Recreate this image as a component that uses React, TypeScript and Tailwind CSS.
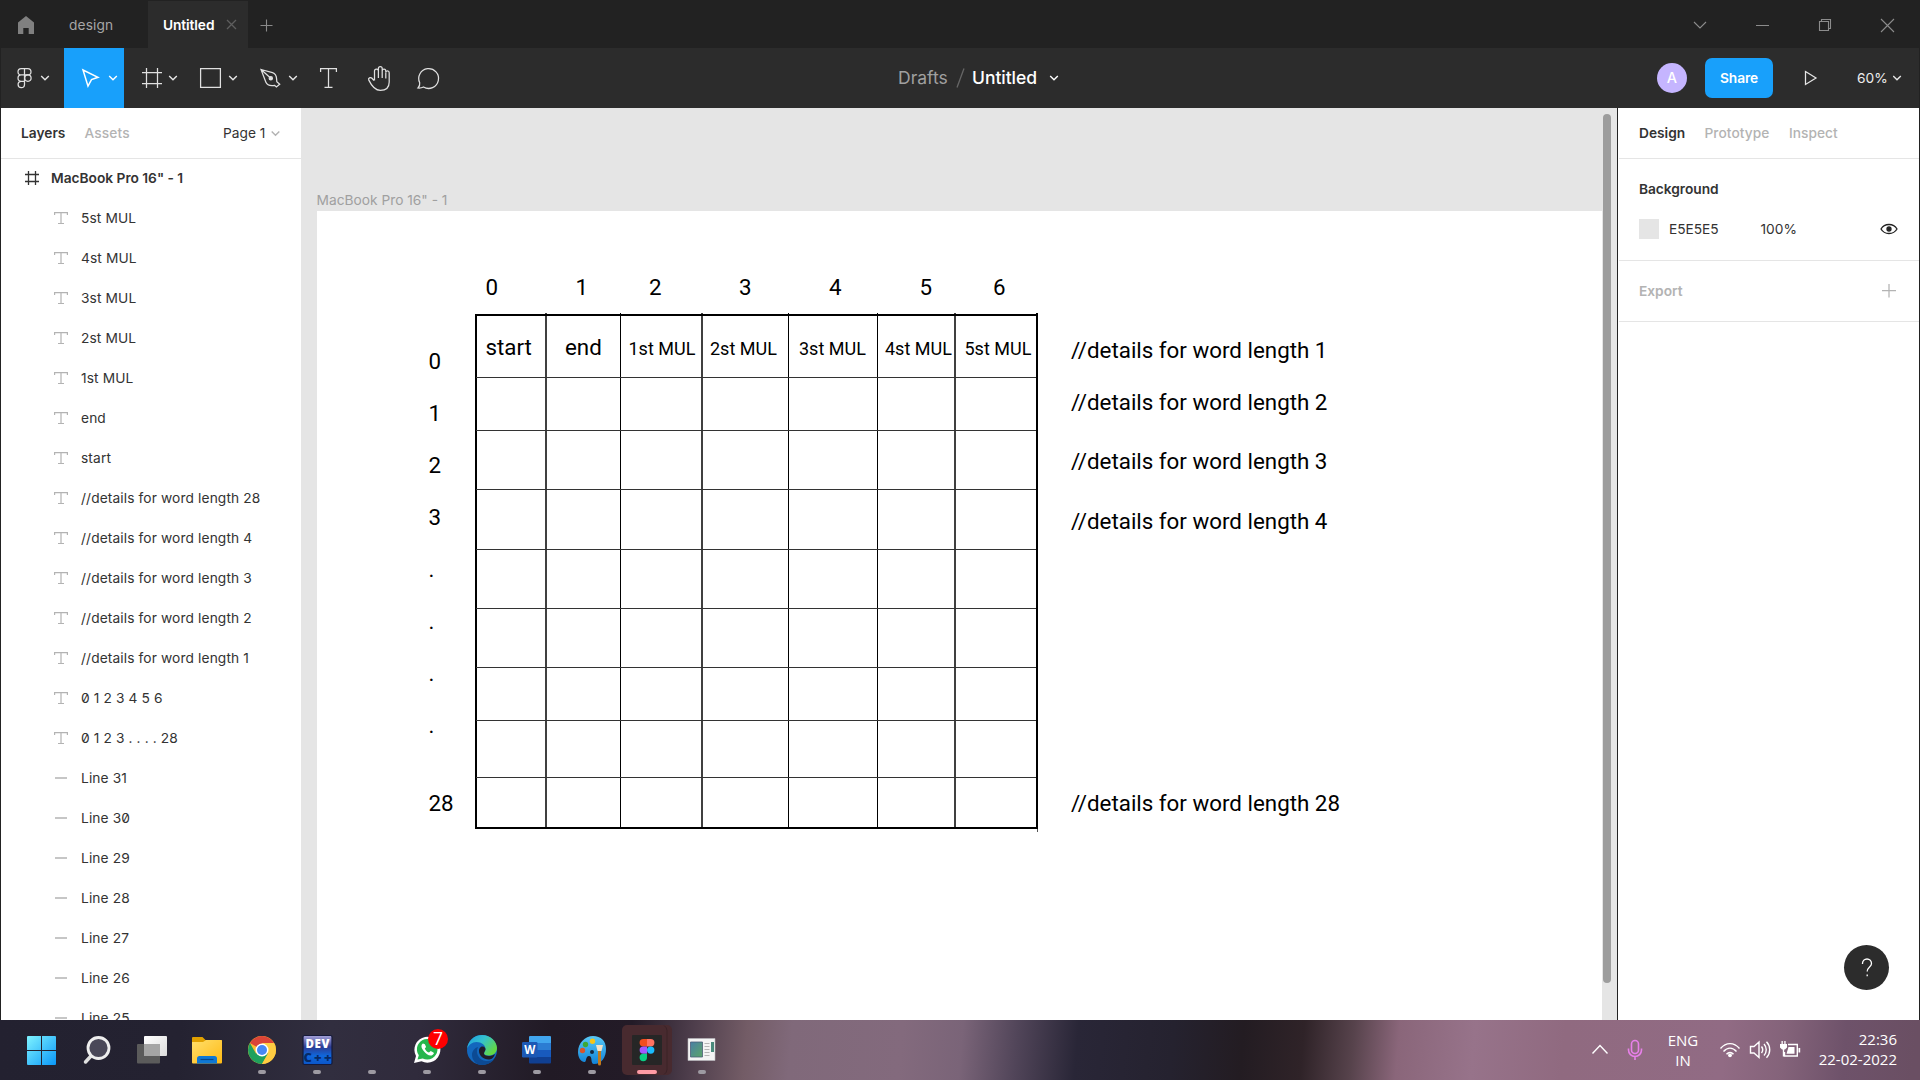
import React from "react";

const ui = "font-['Inter',sans-serif]";

function Chevron({ x, y, s = "#e6e6e6" }: { x: number; y: number; s?: string }) {
  return <path d={`M${x - 3.8} ${y - 2}l3.8 3.8 3.8-3.8`} fill="none" stroke={s} strokeWidth="1.4" />;
}

function Tool({ x, w, active, children }: { x: number; w: number; active?: boolean; children: React.ReactNode }) {
  return (
    <button className={active ? "h-[60px] shrink-0 bg-[#18a0fb]" : "h-[60px] shrink-0"} style={{ width: w }}>
      <svg width={w} height="60" viewBox={`${x} 48 ${w} 60`} fill="none" stroke="#e0e0e0" strokeWidth="1.25">
        {children}
      </svg>
    </button>
  );
}

function TitleBar() {
  return (
    <div className={`flex h-12 items-center bg-[#222222] ${ui}`}>
      <svg className="ml-[17px] shrink-0" width="18" height="20" viewBox="17 14 18 20">
        <path d="M18 22.5L26 16l8 6.500V34h-5.300v-6h-5.400v6H18z" fill="#808080" />
      </svg>
      <div className="ml-[34px] mt-[2px] w-[79px] text-[13.75px] leading-5 tracking-[0.1px] text-[#a6a6a6]">design</div>
      <div className="mt-px flex h-[47px] w-[100px] items-center bg-[#2c2c2c] pl-[15px]">
        <span className="w-[63px] text-[13.75px] font-semibold leading-5 tracking-[-0.1px] text-white">Untitled</span>
        <svg width="11" height="11" viewBox="0 0 11 11" stroke="#5e5e5e" strokeWidth="1.300">
          <path d="M1 1l9 9M10 1l-9 9" />
        </svg>
      </div>
      <svg className="ml-[12px] mt-[2px]" width="13" height="13" viewBox="260 19 13 13" stroke="#8a8a8a" strokeWidth="1.1">
        <path d="M260.500 25.500h12M266.500 19.500v12" />
      </svg>
      <svg className="ml-auto" width="240" height="48" viewBox="1680 0 240 48" fill="none" stroke="#8c8c8c" strokeWidth="1.100">
        <path d="M1694 22l6 6 6-6M1756 25.500h13M1881 19l13 13M1894 19l-13 13" />
        <path d="M1819.500 21.500h9v9h-9zM1821.500 21.500v-2h9v9h-2" />
      </svg>
    </div>
  );
}

function Toolbar() {
  return (
    <div className={`flex h-[60px] items-center border-x border-[#222222] bg-[#2c2c2c] ${ui}`}>
      <div className="flex flex-1">
        <Tool x={1} w={63}>
          <path d="M24.500 68.500h-3.300a3.200 3.200 0 0 0 0 6.400h3.300zM24.500 68.500h3.300a3.200 3.200 0 0 1 0 6.400h-3.300M24.500 74.900h-3.300a3.200 3.200 0 0 0 0 6.400h3.300zM24.500 81.300h-3.300a3.200 3.200 0 1 0 3.300 3.200z" />
          <circle cx="27.900" cy="78.100" r="3.200" />
          <Chevron x={45} y={78} />
        </Tool>
        <Tool x={64} w={60} active>
          <path d="M83 70l15 7.300-6.500 2.300-3.500 6.500z" stroke="#fff" strokeWidth="1.500" />
          <Chevron x={113} y={78} s="#fff" />
        </Tool>
        <Tool x={124} w={60}>
          <path d="M142 72.500h20M142 83.500h20M146.500 68v20M157.500 68v20" />
          <Chevron x={173} y={78} />
        </Tool>
        <Tool x={184} w={60}>
          <path d="M200.600 68.600h19.800v18.800h-19.800z" />
          <Chevron x={233} y={78} />
        </Tool>
        <Tool x={244} w={60}>
          <path d="M261 69.500l11.500 3.200c2.500.8 4 3.300 4.100 6.300l.2 2.700 2.900 2.600-3.300 2.600-1.800-1.600c-4 .6-7.500-.1-8.700-3.100zM261 69.500l9 8" />
          <circle cx="270.800" cy="78.300" r="1.600" fill="#e0e0e0" />
          <Chevron x={293} y={78} />
        </Tool>
        <Tool x={304} w={50}>
          <path d="M320.600 72v-3.400h15.800V72M328.500 68.600v18.800M324.500 87.400h8" />
        </Tool>
        <Tool x={354} w={50}>
          <path d="M374 80.500l-2-2.200c-1.500-1.500-4.200-.2-3.200 1.800 2.200 4.500 5.500 10.300 11.500 10.300 5.600 0 8.900-3.200 8.900-8.400v-9.200c0-2.500-3.400-2.500-3.400 0V71c0-2.600-3.600-2.600-3.600 0v-2.500c0-2.600-3.800-2.600-3.800 0V71c0-2.500-3.900-2.500-3.900 0v9.500M378.400 71v7M382.200 70.500V78M385.800 73v5.500" />
        </Tool>
        <Tool x={404} w={50}>
          <path d="M418 88c1.500-1.700 2-3.200 1.700-5.200a9.900 9.900 0 1 1 3.800 4.200c-1.700.9-3.400 1.200-5.500 1z" />
        </Tool>
      </div>
      <div className="ml-[47px] flex items-center text-[17.5px] leading-6">
        <span className="w-[50px] text-[#a0a0a0]">Drafts</span>
        <svg width="24" height="24" viewBox="948 66 24 24" stroke="#666" strokeWidth="1.300">
          <path d="M957 87.500l7-19" />
        </svg>
        <span className="w-[66px] font-medium tracking-[-0.05px] text-white">Untitled</span>
        <svg width="31" height="24" viewBox="1038 66 31 24">
          <Chevron x={1054} y={78} s="#fff" />
        </svg>
      </div>
      <div className="flex flex-1 items-center justify-end">
        <div className="flex h-[30px] w-[30px] items-center justify-center rounded-full bg-[#c5b5ff] text-[14.5px] font-medium text-white">A</div>
        <button className="ml-[18px] h-10 w-[68px] rounded-[7px] bg-[#18a0fb] text-[13.75px] font-semibold tracking-[-0.1px] text-white">Share</button>
        <svg className="ml-[31px]" width="14" height="16" viewBox="1804 70 14 16" fill="none" stroke="#e6e6e6" strokeWidth="1.250">
          <path d="M1805.500 71.500l10.500 6.500-10.500 6.500z" />
        </svg>
        <span className="ml-[39px] w-9 text-[13.75px] leading-5 text-[#ececec]">60%</span>
        <svg width="26" height="20" viewBox="1893 68 26 20">
          <Chevron x={1897} y={78} />
        </svg>
      </div>
    </div>
  );
}

const layers: [string, string][] = [
  ["T", "5st MUL"],
  ["T", "4st MUL"],
  ["T", "3st MUL"],
  ["T", "2st MUL"],
  ["T", "1st MUL"],
  ["T", "end"],
  ["T", "start"],
  ["T", "//details for word length 28"],
  ["T", "//details for word length 4"],
  ["T", "//details for word length 3"],
  ["T", "//details for word length 2"],
  ["T", "//details for word length 1"],
  ["T", "0 1 2 3 4 5 6"],
  ["T", "0 1 2 3 . . . . 28"],
  ["L", "Line 31"],
  ["L", "Line 30"],
  ["L", "Line 29"],
  ["L", "Line 28"],
  ["L", "Line 27"],
  ["L", "Line 26"],
  ["L", "Line 25"],
];

function LeftPanel() {
  return (
    <aside className={`flex w-[300px] shrink-0 flex-col overflow-hidden bg-white text-[13.75px] leading-5 text-[#333] ${ui}`}>
      <div className="flex h-[51px] shrink-0 items-center border-b border-[#e5e5e5] pl-5">
        <span className="w-[63.5px] font-semibold">Layers</span>
        <span className="font-medium tracking-[0.1px] text-[#b3b3b3]">Assets</span>
        <span className="ml-auto w-[47px]">Page 1</span>
        <svg className="mr-5" width="11" height="12" viewBox="270 127 11 12">
          <Chevron x={275.500} y={133.500} s="#b3b3b3" />
        </svg>
      </div>
      <div className="-mt-px flex h-10 shrink-0 items-center pl-[23px]">
        <svg width="16" height="16" viewBox="0 0 16 16" stroke="#333" strokeWidth="1.300">
          <path d="M1 4.500h14M1 11.500h14M4.500 1v14M11.500 1v14" />
        </svg>
        <span className="ml-[11px] font-semibold tracking-[-0.02px]">MacBook Pro 16" - 1</span>
      </div>
      {layers.map(([kind, name]) => (
        <div key={name} className="flex h-10 shrink-0 items-center pl-[52px]">
          <svg width="16" height="16" viewBox="0 0 16 16" fill="none" stroke="#b3b3b3" strokeWidth="1.200">
            {kind === "T" ? <path d="M1.600 5V2.600h12.800V5M8 2.600v11M5 13.500h6" /> : <path d="M2 8h12" strokeWidth="1.500" />}
          </svg>
          <span className="ml-[12px] whitespace-nowrap tracking-[0.115px] [font-feature-settings:'zero']">{name}</span>
        </div>
      ))}
    </aside>
  );
}

/* Nodes of the drawn frame, in canvas coordinates: x, top, bottom, width, opacity */
const verticals: [number, number, number, number, number][] = [
  [475, 314, 829, 2, 1],
  [545, 313, 828, 2, 0.75],
  [620, 313, 828, 1, 1],
  [701, 313, 828, 2, 0.75],
  [788, 313, 828, 1, 1],
  [877, 313, 828, 1, 1],
  [954, 313, 828, 2, 0.75],
  [1036, 313, 829, 2, 1],
];
const horizontals = [377, 430, 489, 549, 608, 667, 720, 777];
const texts: [string, number, number, boolean?][] = [
  ["0", 485.500, 295], ["1", 575.500, 295], ["2", 649, 295], ["3", 739, 295], ["4", 829, 295], ["5", 919.500, 295], ["6", 993, 295],
  ["0", 428.500, 369], ["1", 428.500, 421], ["2", 428.500, 473], ["3", 428.500, 525], [".", 428.500, 577], [".", 428.500, 629], [".", 428.500, 681], [".", 428.500, 733], ["28", 428.500, 811],
  ["start", 485.500, 355], ["end", 565, 355],
  ["1st MUL", 628.500, 355, true], ["2st MUL", 710, 355, true], ["3st MUL", 799, 355, true], ["4st MUL", 885, 355, true], ["5st MUL", 964.500, 355, true],
  ["//details for word length 1", 1071, 358],
  ["//details for word length 2", 1071, 410],
  ["//details for word length 3", 1071, 469],
  ["//details for word length 4", 1071, 529],
  ["//details for word length 28", 1071, 811],
];

function Canvas() {
  return (
    <main className="flex min-w-0 flex-1 bg-[#e5e5e5]">
      <div className="flex min-w-0 flex-1 flex-col pl-4">
        <div className={`-ml-[0.5px] flex h-[103px] items-end pb-[1px] text-[13.75px] leading-5 text-[#a0a0a0] ${ui}`}>MacBook Pro 16" - 1</div>
        <div className="relative flex-1 overflow-hidden bg-white font-['Roboto',sans-serif] text-black">
          {verticals.map(([x, y1, y2, w, opacity]) => (
            <div key={x} className="absolute bg-black" style={{ left: x - 317, top: y1 - 211, height: y2 - y1, width: w, opacity }} />
          ))}
          {horizontals.map((y) => (
            <div key={y} className="absolute left-[159px] h-px w-[560px] bg-[#333]" style={{ top: y - 211 }} />
          ))}
          <div className="absolute left-[158px] top-[103px] h-[2px] w-[563px] bg-black" />
          <div className="absolute left-[158px] top-[616px] h-[2px] w-[563px] bg-black" />
          <div className="absolute left-[720px] top-[618px] h-[3px] w-px bg-[#555]" />
          {texts.map(([t, x, base, small], i) => (
            <span
              key={i}
              className={small ? "absolute whitespace-nowrap text-[18px] leading-[20px]" : "absolute whitespace-nowrap text-[22.35px] leading-[25px]"}
              style={{ left: x - 317, top: base - 211 - (small ? 16 : 20) }}
            >
              {t}
            </span>
          ))}
        </div>
      </div>
      <div className="flex w-[15px] shrink-0 pl-px pt-[6px]">
        <div className="h-[869px] w-2 rounded-full bg-[#9d9d9d]" />
      </div>
    </main>
  );
}

function RightPanel() {
  return (
    <aside className={`flex w-[303px] shrink-0 flex-col border-x border-[#222] bg-white pl-px text-[13.75px] leading-5 text-[#333] ${ui}`}>
      <div className="flex h-[51px] items-center border-b border-[#e5e5e5] pl-5">
        <span className="w-[65.5px] font-semibold">Design</span>
        <span className="w-[84.5px] font-medium tracking-[0.05px] text-[#b3b3b3]">Prototype</span>
        <span className="font-medium text-[#b3b3b3]">Inspect</span>
      </div>
      <div className="flex h-[102px] flex-col border-b border-[#e5e5e5] pl-5 pt-5">
        <span className="font-semibold tracking-[-0.05px]">Background</span>
        <div className="mt-5 flex items-center">
          <div className="h-5 w-5 bg-[#e5e5e5]" />
          <span className="ml-[10px] w-[91.5px] tracking-[-0.05px]">E5E5E5</span>
          <span>100%</span>
          <svg className="ml-auto mr-[21px]" width="18" height="14" viewBox="0 0 18 14" fill="none" stroke="#222" strokeWidth="1.300">
            <path d="M1 7c3.500-6 12.500-6 16 0-3.500 6-12.500 6-16 0z" />
            <circle cx="9" cy="7" r="2" fill="#222" />
          </svg>
        </div>
      </div>
      <div className="flex h-[61px] items-center border-b border-[#e5e5e5] pl-5 font-semibold tracking-[-0.02px] text-[#b3b3b3]">
        Export
        <svg className="ml-auto mr-[22px]" width="15" height="15" viewBox="0 0 15 15" stroke="#b3b3b3" strokeWidth="1.250">
          <path d="M0 6.500h14M7 0v13.500" />
        </svg>
      </div>
      <div className="mb-[30px] mr-[30px] mt-auto flex h-[45px] w-[45px] items-center justify-center self-end rounded-full bg-[#2c2c2c]">
        <svg width="12" height="20" viewBox="0 0 12 20" fill="none" stroke="#fff" strokeWidth="1.300">
          <path d="M1.500 6V5.500a4.500 4.500 0 0 1 9 0c0 3.500-4.300 3.500-4.300 8M6.200 16.500v1.800" />
        </svg>
      </div>
    </aside>
  );
}

const taskIcons: React.ReactNode[] = [
  <g fill="url(#win)">
    <path d="M27 1037a1 1 0 0 1 1-1h13v14H27zM42 1036h13a1 1 0 0 1 1 1v13H42zM27 1051h14v14H28a1 1 0 0 1-1-1zM42 1051h14v13a1 1 0 0 1-1 1H42z" />
  </g>,
  <g>
    <path d="M91.500 1055.500l-6 6.500" stroke="#e0e0e0" strokeWidth="3.500" strokeLinecap="round" />
    <circle cx="98.500" cy="1048" r="10.500" fill="#4a4858" stroke="#eeeeee" strokeWidth="2.800" />
  </g>,
  <g>
    <rect x="137" y="1044" width="23" height="19.500" rx="1" fill="#5b5b5b" />
    <rect x="144" y="1036" width="23" height="20" rx="1" fill="url(#paper)" />
    <path d="M144 1044h16v12h-16z" fill="#a5a5a5" />
  </g>,
  <g>
    <path d="M192 1038a1 1 0 0 1 1-1h9.500l3 3H221a1 1 0 0 1 1 1v10h-30z" fill="#e0a000" />
    <path d="M192 1042h11l3-2h15a1 1 0 0 1 1 1v21.500a1 1 0 0 1-1 1h-28a1 1 0 0 1-1-1z" fill="url(#folder)" />
    <path d="M197 1063.500v-5a2.500 2.500 0 0 1 2.500-2.500h15a2.500 2.500 0 0 1 2.500 2.500v5z" fill="#0f78d4" />
    <path d="M200.500 1059.500h13" stroke="#09478a" strokeWidth="1.200" />
  </g>,
  <g>
    <circle cx="262" cy="1050" r="14" fill="#fbbc2e" />
    <path d="M262 1050L249.900 1043a14 14 0 0 1 24.200 0z" fill="#db4437" />
    <path d="M249.900 1043a14 14 0 0 0 12.100 21l6.100-10.500-12.200 0z" fill="#1fa15d" />
    <path d="M262 1043h12.100a14 14 0 0 1-12.100 21l6-10.500z" fill="#ffcd42" />
    <circle cx="262" cy="1050" r="6.500" fill="#fff" />
    <circle cx="262" cy="1050" r="5" fill="#4688f4" />
  </g>,
  <g>
    <rect x="303" y="1035.500" width="29" height="29" rx="1.500" fill="url(#dev)" stroke="#151a3a" strokeWidth="1.200" />
    <text x="317.500" y="1048" textAnchor="middle" fontFamily="Open Sans" fontWeight="800" fontSize="11.500" fill="#fff" textLength="24">DEV</text>
    <text x="317.500" y="1061.500" textAnchor="middle" fontFamily="Open Sans" fontWeight="800" fontSize="13" fill="#062a66" textLength="28">C++</text>
  </g>,
  null,
  <g>
    <path d="M414 1063l2-7a13 13 0 1 1 5.500 5.300z" fill="#fff" />
    <path d="M417.500 1059.500l1.300-4.300a10.300 10.300 0 1 1 3.900 3.300z" fill="#25b64c" />
    <path d="M423 1043.500c-2.200 1.500-2 4 .5 7.300 3 4 6.500 5.700 9 4.200 1.800-1.200 1.700-2 .5-2.700l-2.300-1.200-1.700 1.500c-2-.7-3.500-2.300-4.200-4.200l1.300-1.500-1.200-2.700z" fill="#fff" />
    <circle cx="438" cy="1039" r="10" fill="#fe0000" />
    <text x="438" y="1045.300" textAnchor="middle" fontFamily="Open Sans" fontSize="17.500" fill="#fff">7</text>
  </g>,
  <g>
    <circle cx="482" cy="1050" r="15" fill="#1367bd" />
    <path d="M467 1049c1-8 7-14 15-14 9 0 15 7 15 13 0 5-4 7.500-8 7.500-4 0-5-1.500-5-2.500s1.500-1.500 1.500-4c0-4-4-7-9-7-4.500 0-8 3-9.500 7z" fill="url(#edge)" />
    <path d="M478 1047c-3 6 1 13.500 8 14 4 .3 7-1 8.500-2.500-2.500 4-7 6.500-12.500 6.500-6 0-10-5-10-10 0-4 2.500-7 6-8z" fill="#0c4a94" />
    <path d="M479 1051c0-2 1-4.500 3.500-4.500s3 2 3 3-1.500 2.500-1.500 4 1.500 2.500 5 2.500c3 0 5-1.300 6-2-1.500 4.500-4 5.500-6.500 5.500-5 0-9.500-4-9.500-8.500z" fill="#211c28" />
  </g>,
  <g>
    <path d="M529 1037a1 1 0 0 1 1-1h20a1 1 0 0 1 1 1v6h-22z" fill="#41a5ee" />
    <path d="M529 1043h22v7h-22z" fill="#2b7cd3" />
    <path d="M529 1050h22v7h-22z" fill="#185abd" />
    <path d="M529 1057h22v5.500a1 1 0 0 1-1 1h-20a1 1 0 0 1-1-1z" fill="#103f91" />
    <rect x="522" y="1042" width="15.500" height="15.500" rx="1.200" fill="#1c59b5" />
    <text x="529.700" y="1054" textAnchor="middle" fontFamily="Open Sans" fontWeight="700" fontSize="11.500" fill="#fff">W</text>
  </g>,
  <g>
    <path d="M593 1036c8 0 13 5 13 13 0 8-4 15-12 15-4 0-1-8-5-8s-2 7-5 6c-4-1-6-5-6-10 0-9 7-16 15-16z" fill="url(#paint)" />
    <circle cx="582.500" cy="1050.500" r="2.700" fill="#d8552b" />
    <circle cx="585.500" cy="1044.500" r="2.700" fill="#3da935" />
    <circle cx="592.500" cy="1041.300" r="2.700" fill="#f5c518" />
    <circle cx="592" cy="1052" r="2" fill="#152a45" />
    <path d="M596 1045h7l-1.500 6h-4z" fill="#f1e2c8" />
    <path d="M598 1051h3v13a1.500 1.500 0 0 1-3 0z" fill="#c27a1d" />
  </g>,
  <g>
    <rect x="622" y="1025" width="50" height="50" rx="5" fill="#482a2f" />
    <path d="M664 1025.500q3 2 3 5v39q0 3-3 5" fill="none" stroke="#3a2227" strokeWidth="1" />
    <rect x="632" y="1035" width="30" height="30" rx="1" fill="#262626" />
    <path d="M647 1039h-3.700a3.700 3.700 0 0 0 0 7.400h3.700z" fill="#f24e1e" />
    <path d="M647 1039h3.700a3.700 3.700 0 0 1 0 7.400H647z" fill="#ff7262" />
    <path d="M647 1046.400h-3.700a3.700 3.700 0 0 0 0 7.400h3.700z" fill="#a259ff" />
    <circle cx="650.700" cy="1050.100" r="3.700" fill="#1abcfe" />
    <path d="M647 1053.800h-3.700a3.700 3.700 0 1 0 3.700 3.700z" fill="#0acf83" />
  </g>,
  <g>
    <path d="M688 1038.500h27v22h-27z" fill="#f4f4f4" stroke="#b9b9bd" strokeWidth=".6" />
    <path d="M690.500 1042h12v15h-12z" fill="url(#pic)" stroke="#4c5e78" strokeWidth=".8" />
    <path d="M711 1042h3v10h-3z" fill="#4a8a7c" />
    <path d="M704.500 1043.500h5M704.500 1046.500h5M704.500 1049.500h5M704.500 1052.500h5M704.500 1055.500h5" stroke="#b5b5b5" />
  </g>,
];

function Taskbar() {
  return (
    <footer className="flex h-[60px] items-center bg-[linear-gradient(95deg,#232130_0px,#242231_180px,#312e3f_330px,#302b3c_420px,#211a25_550px,#231b27_630px,#4d3d4b_690px,#735c66_745px,#80697a_790px,#836a7d_900px,#7a6478_960px,#514559_1015px,#292637_1075px,#25222f_1170px,#231c22_1240px,#2f2328_1300px,#57434c_1350px,#8a667a_1395px,#97738a_1470px,#906a80_1560px,#916b84_1720px,#84637a_1780px,#6e526a_1840px,#6a4f63_1910px)] font-['Open_Sans',sans-serif] text-white">
      <svg className="h-0 w-0 shrink-0" aria-hidden="true">
        <defs>
          <linearGradient id="win" gradientUnits="userSpaceOnUse" x1="27" y1="1036" x2="56" y2="1065"><stop stopColor="#7ff3ff" /><stop offset="1" stopColor="#0a97f8" /></linearGradient>
          <linearGradient id="paper" x1="0" y1="0" x2="1" y2="1"><stop stopColor="#fff" /><stop offset="1" stopColor="#dcdcdc" /></linearGradient>
          <linearGradient id="folder" x1="0" y1="0" x2="1" y2="1"><stop stopColor="#ffdf6b" /><stop offset="1" stopColor="#ffba14" /></linearGradient>
          <linearGradient id="dev" x1="0" y1="0" x2="0" y2="1"><stop stopColor="#a7a3d9" /><stop offset=".4" stopColor="#2c3c92" /><stop offset=".7" stopColor="#0f67dd" /><stop offset="1" stopColor="#0b55c8" /></linearGradient>
          <linearGradient id="edge" x1="0" y1="0" x2="1" y2=".6"><stop stopColor="#1b9de2" /><stop offset=".5" stopColor="#35c1cd" /><stop offset="1" stopColor="#62d943" /></linearGradient>
          <linearGradient id="paint" x1="0" y1="0" x2="0" y2="1"><stop stopColor="#58c8f5" /><stop offset="1" stopColor="#1183d8" /></linearGradient>
          <linearGradient id="pic" x1="0" y1="0" x2="1" y2="1"><stop stopColor="#4a7fa5" /><stop offset="1" stopColor="#5ba568" /></linearGradient>
        </defs>
      </svg>
      <div className="flex pl-[14px]">
        {taskIcons.map((icon, i) => (
          <svg key={i} width="55" height="60" viewBox={`${14 + 55 * i} 1020 55 60`}>
            {icon}
            {i === 11 ? (
              <rect x="637" y="1070" width="20" height="4" rx="2" fill="#ff9aa5" />
            ) : i > 3 ? (
              <rect x={38 + 55 * i} y="1070" width="8" height="4" rx="2" fill="#9d9aa2" />
            ) : null}
          </svg>
        ))}
      </div>
      <svg className="ml-auto" width="60" height="60" viewBox="1590 1020 60 60" fill="none" strokeWidth="1.400">
        <path d="M1592.500 1053.500l7.500-8 7.500 8" stroke="#fff" />
        <rect x="1631.500" y="1040.500" width="7" height="13" rx="3.500" stroke="#e880ea" strokeWidth="1.600" />
        <path d="M1628.500 1048.500v1.500a6.500 6.500 0 0 0 13 0v-1.500M1635 1056.500v3.500" stroke="#e880ea" strokeWidth="1.600" />
      </svg>
      <div className="ml-[13px] w-10 text-center text-[15px] leading-5">
        <div>ENG</div>
        <div>IN</div>
      </div>
      <svg className="ml-[14px]" width="88" height="60" viewBox="1717 1020 88 60" fill="none" stroke="#fff" strokeWidth="1.400">
        <path d="M1720.500 1048.500c5.500-6.500 13.500-6.500 19 0M1723.500 1051.500c4-4.500 9-4.500 13 0M1726.500 1054.300c2.200-2.400 4.800-2.400 7 0" />
        <circle cx="1730" cy="1055.300" r="1.900" fill="#fff" stroke="none" />
        <path d="M1750.500 1046.500h3.500l5-4.500v15.500l-5-4.500h-3.500zM1761.500 1046.500c1.500 2 1.500 4.500 0 6.500M1764 1044c3 3.300 3 8.200 0 11.500M1766.500 1041.800c4.300 4.500 4.300 11.500 0 16" />
        <path d="M1788 1044.500h9.300v11.500h-12.800v-4" />
        <path d="M1788.500 1047h6v6.700h-8z" fill="#fff" stroke="none" />
        <path d="M1798.500 1048h1.700v4.500h-1.700z" fill="#fff" stroke="none" />
        <path d="M1780 1044h7v3.500l-2 2h-3l-2-2zM1781.500 1041h1.300v3h-1.300zM1784.300 1041h1.300v3h-1.300z" fill="#fff" stroke="none" />
        <path d="M1783.500 1049v7.500" />
      </svg>
      <div className="mr-[23px] w-[92px] text-right text-[15px] leading-5">
        <div className="-mt-[2px]">22:36</div>
        <div className="whitespace-nowrap">22-02-2022</div>
      </div>
    </footer>
  );
}

export default function App() {
  return (
    <div className="flex h-[1080px] w-[1920px] flex-col overflow-hidden bg-[#222]">
      <TitleBar />
      <Toolbar />
      <div className="flex min-h-0 flex-1 pl-px">
        <LeftPanel />
        <Canvas />
        <RightPanel />
      </div>
      <Taskbar />
    </div>
  );
}
